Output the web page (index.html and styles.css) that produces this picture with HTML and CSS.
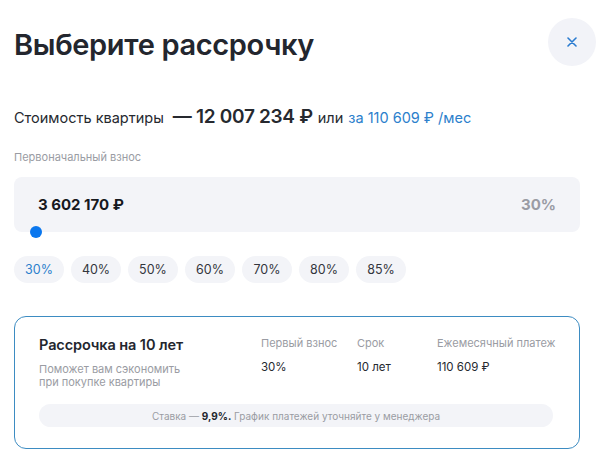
FILE: index.html
```html
<!DOCTYPE html>
<html lang="ru">
<head>
<meta charset="utf-8">
<link rel="stylesheet" href="styles.css">
</head>
<body>
<div class="modal">
  <header class="head">
    <h1 class="title">Выберите рассрочку</h1>
    <button class="close" aria-label="Закрыть">
      <svg width="10" height="10" viewBox="0 0 10 10"><path d="M1 1L9 9M9 1L1 9" stroke="#2a7bd0" stroke-width="1.6" stroke-linecap="round"/></svg>
    </button>
  </header>

  <p class="price">
    <span class="price-label">Стоимость квартиры</span>
    <span class="price-sum">— 12 007 234 ₽</span>
    <span class="price-or">или</span>
    <span class="price-month">за 110 609 ₽ /мес</span>
  </p>

  <div class="label">Первоначальный взнос</div>
  <div class="field">
    <span class="field-value">3 602 170 ₽</span>
    <span class="field-pct">30%</span>
    <span class="thumb"></span>
  </div>

  <div class="chips">
    <span class="chip active">30%</span>
    <span class="chip">40%</span>
    <span class="chip">50%</span>
    <span class="chip">60%</span>
    <span class="chip">70%</span>
    <span class="chip">80%</span>
    <span class="chip">85%</span>
  </div>

  <section class="card">
    <div class="card-top">
      <div class="card-info">
        <div class="card-title">Рассрочка на 10 лет</div>
        <div class="card-sub">Поможет вам сэкономить<br>при покупке квартиры</div>
      </div>
      <div class="col col-1">
        <div class="col-label">Первый взнос</div>
        <div class="col-value">30%</div>
      </div>
      <div class="col col-2">
        <div class="col-label">Срок</div>
        <div class="col-value">10 лет</div>
      </div>
      <div class="col col-3">
        <div class="col-label">Ежемесячный платеж</div>
        <div class="col-value">110 609 ₽</div>
      </div>
    </div>
    <div class="note">Ставка — <b>9,9%.</b> График платежей уточняйте у менеджера</div>
  </section>
</div>
</body>
</html>
```

FILE: styles.css
```css
* { box-sizing: border-box; }
html, body { margin: 0; padding: 0; background: #fff; }
body {
  font-family: Inter, "Noto Sans", sans-serif;
  color: #22252d;
}
.modal {
  width: 601px;
  padding: 18px 5px 0 14px;
}
.head {
  display: flex;
  align-items: center;
  justify-content: space-between;
  height: 48px;
}
.title {
  margin: 0;
  font-size: 29px;
  font-weight: 600;
  letter-spacing: -0.35px;
  color: #23262e;
  line-height: 1;
  padding-top: 4px;
}
.close {
  width: 48px;
  height: 48px;
  border-radius: 50%;
  border: 0;
  background: #f2f3f8;
  display: flex;
  align-items: center;
  justify-content: center;
  padding: 0;
}
.price {
  margin: 40px 0 0;
  font-size: 14.5px;
  line-height: 22px;
  display: flex;
  align-items: baseline;
  color: #26292f;
  white-space: pre;
}
.price-label { margin-right: 9px; }
.price-sum { font-size: 19px; font-weight: 600; margin-right: 5px; letter-spacing: -0.3px; }
.price-or { margin-right: 5px; }
.price-month { color: #2b80cc; }
.label {
  margin-top: 21px;
  font-size: 11px;
  color: #9a9ca3;
  line-height: 14px;
}
.field {
  position: relative;
  margin-top: 13px;
  width: 566px;
  height: 55px;
  border-radius: 8px;
  background: #f3f4f8;
  display: flex;
  align-items: center;
  justify-content: space-between;
  padding: 0 24px;
}
.field-value { font-size: 15px; font-weight: 700; color: #17191e; }
.field-pct { font-size: 15px; font-weight: 700; color: #9a9ca5; }
.thumb {
  position: absolute;
  left: 16px;
  bottom: -6px;
  width: 12px;
  height: 12px;
  border-radius: 50%;
  background: #0a77ee;
}
.chips {
  margin-top: 24px;
  display: flex;
  gap: 7px;
}
.chip {
  width: 50px;
  height: 27px;
  border-radius: 14px;
  background: #f3f4f8;
  font-size: 12.5px;
  color: #33363d;
  display: flex;
  align-items: center;
  justify-content: center;
}
.chip.active { color: #2b80cc; }
.card {
  margin-top: 33px;
  width: 566px;
  height: 133px;
  border: 1px solid #3d8cc2;
  border-radius: 12px;
  padding: 18px 20px 0 24px;
}
.card-top {
  display: flex;
  height: 54px;
}
.card-info { width: 222px; }
.card-title { font-size: 14.5px; font-weight: 600; color: #23262e; line-height: 20px; letter-spacing: -0.1px; }
.card-sub { margin-top: 8px; font-size: 11px; line-height: 13px; color: #9a9ca3; }
.col { font-size: 11px; white-space: nowrap; }
.col-1 { width: 96px; }
.col-2 { width: 80px; }
.col-label { color: #9a9ca3; line-height: 16px; margin-top: 0; }
.col-value { color: #26292f; font-size: 11.5px; margin-top: 8px; line-height: 16px; }
.note {
  margin-top: 15px;
  width: 514px;
  height: 23px;
  border-radius: 12px;
  background: #f3f4f8;
  font-size: 10px;
  color: #9a9ca3;
  display: flex;
  align-items: center;
  justify-content: center;
  white-space: pre;
}
.note b { color: #23262e; font-weight: 700; }
```
